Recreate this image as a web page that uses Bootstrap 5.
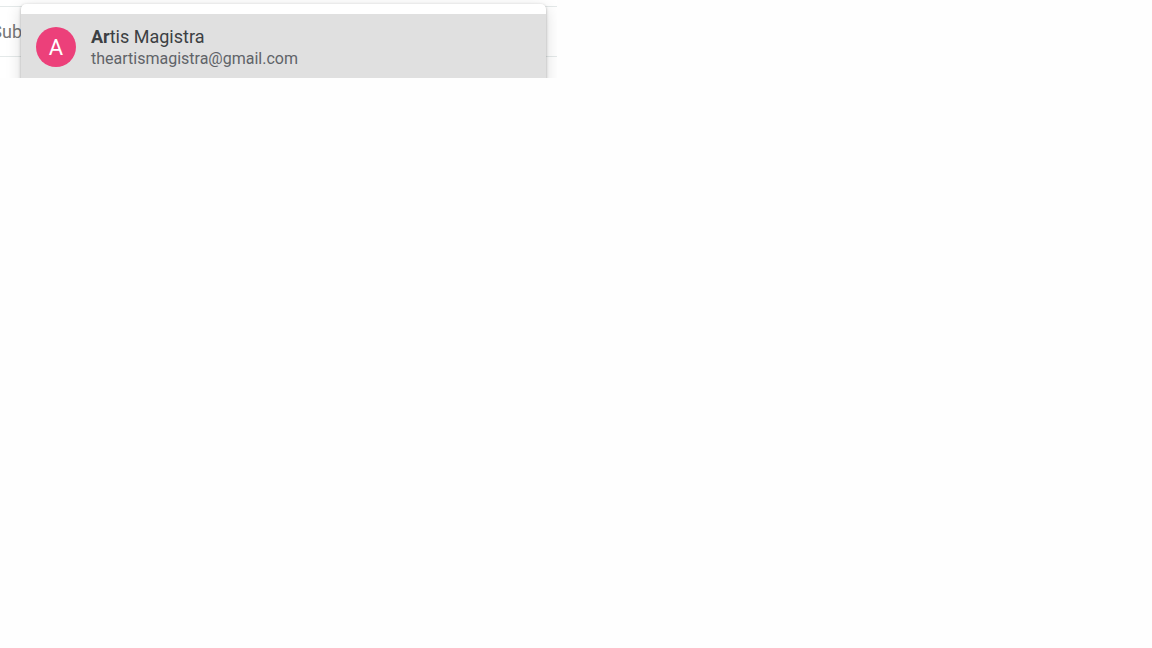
<!DOCTYPE html>
<html lang="en">
<head>
<meta charset="utf-8">
<meta name="viewport" content="width=device-width, initial-scale=1">
<title>Compose</title>
<link href="https://cdn.jsdelivr.net/npm/bootstrap@5.3.0/dist/css/bootstrap.min.css" rel="stylesheet">
<style>
body { font-family: Roboto, "Liberation Sans", sans-serif; background: #fefefe; }
.compose { max-width: 557px; background: #fff; }
.recipient-row { height: 7px; border-bottom: 1px solid #e4e9e9; }
.subject-row { height: 50px; border-bottom: 1px solid #e4e9e9; }
.compose-body { height: 21px; }
.subject-cell { width: 22px; }
.subject-input { width: 60px; height: 48px; font-size: 18px; color: #777; text-align: right; outline: 0; }
.subject-input::placeholder { color: #777; opacity: 1; }
.suggestions { top: 4px; left: 21px; right: 11px; padding-top: 10px; border-radius: 5px; box-shadow: 0 1px 3px rgba(0,0,0,.3), 0 4px 16px rgba(0,0,0,.15); }
.suggestion { height: 80px; padding: 12px 15px; gap: 15px; background: #e0e0e0; color: #3c4043; }
.avatar { width: 40px; height: 40px; margin-top: 1px; background: #ec407a; color: #fff; font-size: 22px; }
.contact-name { font-size: 18px; line-height: 22px; }
.contact-mail { font-size: 16px; line-height: 22px; color: #5f6368; }
</style>
</head>
<body>
<main class="compose position-relative overflow-hidden">
  <div class="recipient-row"></div>
  <div class="subject-row">
    <div class="subject-cell h-100 d-flex justify-content-end align-items-start overflow-hidden">
      <input class="subject-input border-0 p-0 bg-transparent flex-shrink-0" type="text" placeholder="Sub" aria-label="Subject">
    </div>
  </div>
  <div class="compose-body"></div>
  <div class="suggestions position-absolute bg-white">
    <button type="button" class="suggestion d-flex align-items-start w-100 border-0 text-start">
      <span class="avatar rounded-circle d-flex align-items-center justify-content-center">A</span>
      <span class="d-flex flex-column">
        <span class="contact-name"><b>Ar</b>tis Magistra</span>
        <span class="contact-mail">theartismagistra@gmail.com</span>
      </span>
    </button>
  </div>
</main>
<script src="https://cdn.jsdelivr.net/npm/bootstrap@5.3.0/dist/js/bootstrap.bundle.min.js"></script>
</body>
</html>
